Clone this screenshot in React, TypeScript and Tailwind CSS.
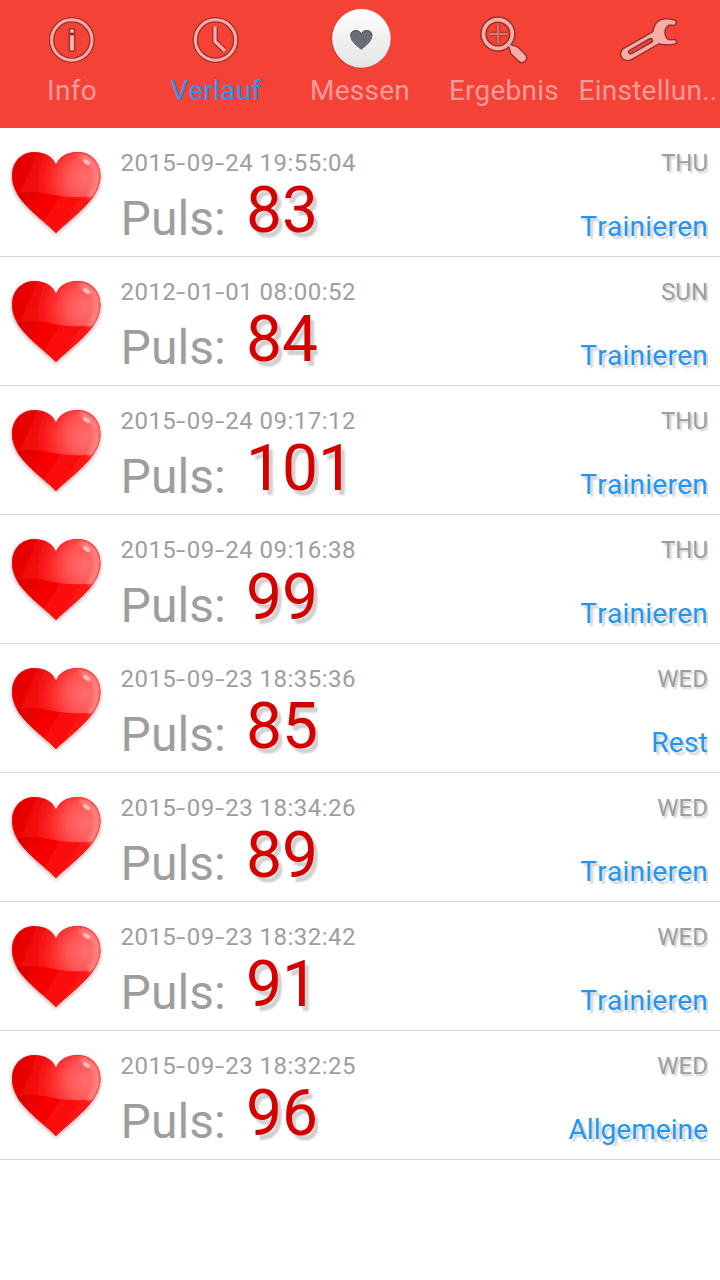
import { Fragment, useId } from 'react'
import type { ReactNode } from 'react'

interface Measurement {
  date: string
  day: string
  pulse: number
  mode: string
}

const measurements: Measurement[] = [
  { date: '2015-09-24 19:55:04', day: 'THU', pulse: 83, mode: 'Trainieren' },
  { date: '2012-01-01 08:00:52', day: 'SUN', pulse: 84, mode: 'Trainieren' },
  { date: '2015-09-24 09:17:12', day: 'THU', pulse: 101, mode: 'Trainieren' },
  { date: '2015-09-24 09:16:38', day: 'THU', pulse: 99, mode: 'Trainieren' },
  { date: '2015-09-23 18:35:36', day: 'WED', pulse: 85, mode: 'Rest' },
  { date: '2015-09-23 18:34:26', day: 'WED', pulse: 89, mode: 'Trainieren' },
  { date: '2015-09-23 18:32:42', day: 'WED', pulse: 91, mode: 'Trainieren' },
  { date: '2015-09-23 18:32:25', day: 'WED', pulse: 96, mode: 'Allgemeine' },
]

const LIGHT = '#f5aeaa'
const DARK = '#8f2e2a'

function InfoIcon() {
  return (
    <svg viewBox="0 0 64 64" className="size-16 blur-[0.4px]" fill="none">
      <circle cx="31.8" cy="32" r="20.2" stroke={DARK} strokeOpacity="0.8" strokeWidth="5.6" />
      <circle cx="31.8" cy="32" r="20.2" stroke={LIGHT} strokeWidth="2.9" />
      <rect x="28.4" y="20" width="7" height="24" rx="1" fill={DARK} fillOpacity="0.8" />
      <rect x="30" y="21.6" width="4" height="3" fill={LIGHT} />
      <rect x="30" y="27.4" width="4" height="15" fill={LIGHT} />
    </svg>
  )
}

function ClockIcon() {
  return (
    <svg viewBox="0 0 64 64" className="size-16 blur-[0.4px]" fill="none">
      <circle cx="31.5" cy="32" r="20.2" stroke={DARK} strokeOpacity="0.8" strokeWidth="5.6" />
      <path d="M31 19V33.4L40.5 42.5" stroke={DARK} strokeOpacity="0.8" strokeWidth="6" />
      <circle cx="31.5" cy="32" r="20.2" stroke={LIGHT} strokeWidth="2.9" />
      <path d="M31 18.5V33.4L41 43" stroke={LIGHT} strokeWidth="3.2" />
    </svg>
  )
}

function MeasureIcon() {
  return (
    <svg viewBox="0 0 64 64" className="size-16 blur-[0.3px]">
      <defs>
        <linearGradient id="knob" x1="0" y1="0" x2="0" y2="1">
          <stop offset="0" stopColor="#ffffff" />
          <stop offset="1" stopColor="#e2e3e4" />
        </linearGradient>
      </defs>
      <circle cx="32.6" cy="31.2" r="29.6" fill="#b53229" fillOpacity="0.45" />
      <circle cx="33.4" cy="30.4" r="29.3" fill="url(#knob)" />
      <path
        d="M33.3 42C29.5 38.4 22.3 34 22.3 28C22.3 24.4 24.8 22.3 27.7 22.3C30.4 22.3 32.4 23.6 33.3 25.8C34.2 23.6 36.2 22.3 38.9 22.3C41.9 22.3 44.3 24.4 44.3 28C44.3 34 37 38.4 33.3 42Z"
        fill="#686d7a"
      />
      <path d="M33.3 25.8C34.2 23.6 36.2 22.6 38.9 22.6C41.9 22.6 44 24.6 44 28" fill="none" stroke="#474b58" strokeWidth="0.9" />
      <path d="M22.7 28C22.7 24.6 25 22.6 27.7 22.6C30.4 22.6 32.4 23.8 33.3 25.8" fill="none" stroke="#474b58" strokeWidth="0.9" />
    </svg>
  )
}

function ResultIcon() {
  return (
    <svg viewBox="0 0 64 64" className="size-16 blur-[0.4px]" fill="none">
      <circle cx="25.9" cy="26" r="14.4" stroke={DARK} strokeOpacity="0.85" strokeWidth="6.8" />
      <path
        d="M36.5 36.5L40 37.8L45.5 39.8L53.2 47.6Q55 50.2 52.7 52.8Q49.6 55 47.2 52.8L39.4 45.2L38 40Z"
        stroke={DARK}
        strokeOpacity="0.85"
        strokeWidth="3"
        strokeLinejoin="round"
      />
      <path d="M25.9 17V35M16.9 26H34.9" stroke={DARK} strokeWidth="4.4" strokeOpacity="0.5" />
      <path d="M25.9 17V35M16.9 26H34.9" stroke="#cf7771" strokeWidth="2" />
      <circle cx="25.9" cy="26" r="14.4" stroke={LIGHT} strokeWidth="3.6" />
      <path d="M35.5 35.5L40 37.8L45.5 39.8L53.2 47.6Q55 50.2 52.7 52.8Q49.6 55 47.2 52.8L39.4 45.2L38 40Z" fill={LIGHT} />
    </svg>
  )
}

function WrenchIcon() {
  const body =
    'M59.6 13.2L58.8 16.6L52.6 16.6Q48.4 19 48.2 24.6Q48.6 30.4 52 32.2L59.4 32.4L60 34.4Q57.4 36 50.6 35.9Q46 36 43 35L14.6 51.2Q10.2 53 7.2 50.2Q4 46.6 6.4 42.6Q7 41.4 9 40.4L37.4 24.3Q38.6 16 44.6 12.6Q51.6 10.2 59.6 13.2Z'
  return (
    <svg viewBox="0 0 64 64" className="size-16 blur-[0.4px]" strokeLinejoin="round" strokeLinecap="round">
      <path d={body} fill={LIGHT} stroke={DARK} strokeOpacity="0.85" strokeWidth="3" />
      <path d={body} fill={LIGHT} />
      <path d="M14.6 44L34.4 32.6" stroke={DARK} strokeWidth="5.4" />
      <path d="M14.6 44L34.4 32.6" stroke="#e8443a" strokeWidth="2.8" />
    </svg>
  )
}

interface Tab {
  label: string
  icon: ReactNode
  active?: boolean
}

const tabs: Tab[] = [
  { label: 'Info', icon: <InfoIcon /> },
  { label: 'Verlauf', icon: <ClockIcon />, active: true },
  { label: 'Messen', icon: <MeasureIcon /> },
  { label: 'Ergebnis', icon: <ResultIcon /> },
  { label: 'Einstellun..', icon: <WrenchIcon /> },
]

function HeartImage() {
  const id = useId()
  const shape =
    'M56 105C51 99.5 43 93.5 36 87C24 76 12 64 12 48C12 34 21 24 34.5 24C45 24 53 29 56 37C59 29 67 24 77.5 24C91 24 100.4 34 100.4 48C100.4 64 88 76 76 87C69 93.5 61 99.5 56 105Z'
  return (
    <svg viewBox="0 0 112 128" className="h-32 w-28 shrink-0">
      <defs>
        <linearGradient id={`${id}base`} x1="0" y1="0.2" x2="1" y2="0.6">
          <stop offset="0" stopColor="#e00000" />
          <stop offset="0.4" stopColor="#fa0e0e" />
          <stop offset="1" stopColor="#ff3030" />
        </linearGradient>
        <radialGradient id={`${id}shine`} cx="86" cy="50" r="56" gradientUnits="userSpaceOnUse">
          <stop offset="0" stopColor="#ff7070" />
          <stop offset="0.35" stopColor="#ff5a5a" stopOpacity="0.9" />
          <stop offset="1" stopColor="#ff2020" stopOpacity="0" />
        </radialGradient>
        <linearGradient id={`${id}low`} x1="0" y1="0" x2="1" y2="0.3">
          <stop offset="0" stopColor="#cc0000" />
          <stop offset="0.4" stopColor="#f80000" />
          <stop offset="1" stopColor="#ff2020" />
        </linearGradient>
        <filter id={`${id}blur`} x="-30%" y="-30%" width="160%" height="160%">
          <feGaussianBlur stdDeviation="2" />
        </filter>
        <filter id={`${id}soft`} x="-30%" y="-30%" width="160%" height="160%">
          <feGaussianBlur stdDeviation="0.7" />
        </filter>
        <clipPath id={`${id}clip`}>
          <path d={shape} />
        </clipPath>
      </defs>
      <path d={shape} transform="translate(0 1.5)" fill="#500" opacity="0.4" filter={`url(#${id}blur)`} />
      <g filter={`url(#${id}soft)`}>
        <path d={shape} fill={`url(#${id}base)`} />
        <g clipPath={`url(#${id}clip)`}>
          <rect width="112" height="128" fill={`url(#${id}shine)`} />
          <path d="M8 68C22 63 38 63 52 66.5C66 70 80 69.5 104 68V110H8Z" fill={`url(#${id}low)`} />
          <path d="M80 28C91 30 96.5 38 97 48C97 58 93 65 89 70" fill="none" stroke="#ffa0a0" strokeWidth="4" opacity="0.8" filter={`url(#${id}blur)`} />
          <path d={shape} fill="none" stroke="#e81818" strokeWidth="1.6" opacity="0.4" />
        </g>
      </g>
      <ellipse cx="86.5" cy="34" rx="4" ry="2" transform="rotate(35 86.5 34)" fill="#ffe0e0" opacity="0.75" filter={`url(#${id}soft)`} />
    </svg>
  )
}

// The hyphens in the date are set wider than the font's own
function DateText({ value }: { value: string }) {
  return (
    <div className="h-7 text-2xl leading-7 tracking-[0.47px] whitespace-pre text-[#9e9e9e]">
      {value.split('-').map((part, i) => (
        <Fragment key={i}>
          {i > 0 && <span className="inline-block w-[10.5px] origin-left scale-x-[1.4]">-</span>}
          {part}
        </Fragment>
      ))}
    </div>
  )
}

function MeasurementRow({ item }: { item: Measurement }) {
  return (
    <li className="flex h-[129px] border-b border-[#dadada]">
      <HeartImage />
      <div className="flex flex-1 flex-col pt-[21px] pl-[8.5px]">
        <DateText value={item.date} />
        <div className="mt-0.5 flex items-end">
          <span className="w-[125.5px] text-5xl leading-12 tracking-[0.1px] text-[#9e9e9e]">Puls:</span>
          <span className="text-[64px] leading-16 text-[#d50000] [clip-path:inset(0)] [text-shadow:4px_5px_2px_#d0d0d0]">
            {item.pulse}
          </span>
        </div>
      </div>
      <div className="mr-3 flex flex-col items-end justify-between pt-[21px] pb-[13px]">
        <span className="text-2xl leading-7 text-[#9e9e9e] [clip-path:inset(0)] [text-shadow:2px_2px_2px_#d0d0d0]">{item.day}</span>
        <span
          className={`text-[28px] leading-8 text-[#2196f3] [clip-path:inset(0)] [font-kerning:none] [text-shadow:3px_3px_2px_#d0d0d0] ${
            item.mode === 'Allgemeine' ? 'tracking-[0.05px]' : 'tracking-[0.25px]'
          }`}
        >
          {item.mode}
        </span>
      </div>
    </li>
  )
}

export default function App() {
  return (
    <div className="min-h-screen bg-white font-[Roboto,sans-serif]">
      <nav className="grid h-32 grid-cols-5 bg-[#f44336]">
        {tabs.map((tab) => (
          <button key={tab.label} className="flex min-w-0 flex-col items-center pt-2">
            {tab.icon}
            <span
              className={`mt-[3px] text-[28px] leading-8 font-[380] tracking-[0.25px] whitespace-nowrap ${
                tab.active ? 'text-[#2196f3] [font-kerning:none]' : 'text-[#f39b9a]'
              }`}
            >
              {tab.label}
            </span>
          </button>
        ))}
      </nav>
      <ul>
        {measurements.map((item) => (
          <MeasurementRow key={item.date} item={item} />
        ))}
      </ul>
    </div>
  )
}
